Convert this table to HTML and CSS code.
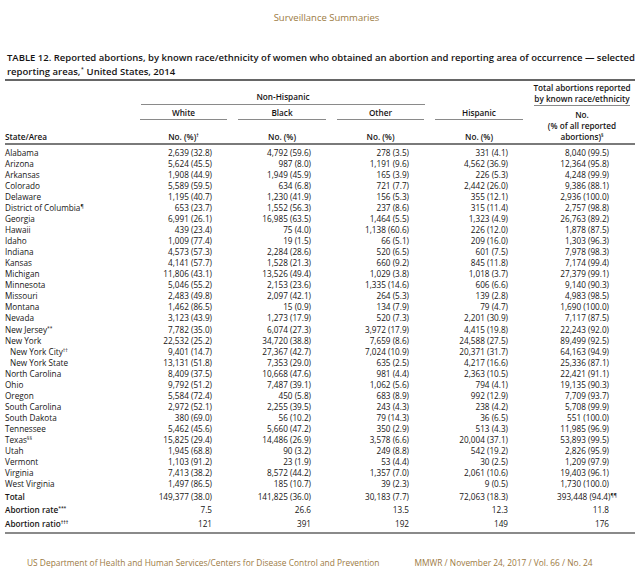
FILE: index.html
```html
<!DOCTYPE html>
<html lang="en">
<head>
<meta charset="utf-8">
<title>MMWR Table 12</title>
<link rel="stylesheet" href="styles.css">
</head>
<body>
<div class="page">
  <div class="running">Surveillance Summaries</div>
  <h1 class="title"><span class="tline">TABLE 12. Reported abortions, by known race/ethnicity of women who obtained an abortion and reporting area of occurrence — selected</span> <span class="tline">reporting areas,<sup>*</sup> United States, 2014</span></h1>
  <div class="table">
    <div class="thead cols">
      <div class="h-state">State/Area</div>
      <div class="h-nonhisp">Non-Hispanic</div>
      <div class="h-group h-white">White</div>
      <div class="h-group h-black">Black</div>
      <div class="h-group h-other">Other</div>
      <div class="h-group h-hisp">Hispanic</div>
      <div class="h-no h-no-white">No. (%)<sup>†</sup></div>
      <div class="h-no h-no-black">No. (%)</div>
      <div class="h-no h-no-other">No. (%)</div>
      <div class="h-no h-no-hisp">No. (%)</div>
      <div class="h-total">Total abortions reported<br>by known race/ethnicity</div>
      <div class="h-total-no">No.<br>(% of all reported<br>abortions)<sup>§</sup></div>
    </div>
    <div class="tbody">
      <div class="row cols"><span class="st">Alabama</span><span class="v">2,639 (32.8)</span><span class="v">4,792 (59.6)</span><span class="v">278 (3.5)</span><span class="v">331 (4.1)</span><span class="v t">8,040 (99.5)</span></div>
      <div class="row cols"><span class="st">Arizona</span><span class="v">5,624 (45.5)</span><span class="v">987 (8.0)</span><span class="v">1,191 (9.6)</span><span class="v">4,562 (36.9)</span><span class="v t">12,364 (95.8)</span></div>
      <div class="row cols"><span class="st">Arkansas</span><span class="v">1,908 (44.9)</span><span class="v">1,949 (45.9)</span><span class="v">165 (3.9)</span><span class="v">226 (5.3)</span><span class="v t">4,248 (99.9)</span></div>
      <div class="row cols"><span class="st">Colorado</span><span class="v">5,589 (59.5)</span><span class="v">634 (6.8)</span><span class="v">721 (7.7)</span><span class="v">2,442 (26.0)</span><span class="v t">9,386 (88.1)</span></div>
      <div class="row cols"><span class="st">Delaware</span><span class="v">1,195 (40.7)</span><span class="v">1,230 (41.9)</span><span class="v">156 (5.3)</span><span class="v">355 (12.1)</span><span class="v t">2,936 (100.0)</span></div>
      <div class="row cols"><span class="st">District of Columbia<sup>¶</sup></span><span class="v">653 (23.7)</span><span class="v">1,552 (56.3)</span><span class="v">237 (8.6)</span><span class="v">315 (11.4)</span><span class="v t">2,757 (98.8)</span></div>
      <div class="row cols"><span class="st">Georgia</span><span class="v">6,991 (26.1)</span><span class="v">16,985 (63.5)</span><span class="v">1,464 (5.5)</span><span class="v">1,323 (4.9)</span><span class="v t">26,763 (89.2)</span></div>
      <div class="row cols"><span class="st">Hawaii</span><span class="v">439 (23.4)</span><span class="v">75 (4.0)</span><span class="v">1,138 (60.6)</span><span class="v">226 (12.0)</span><span class="v t">1,878 (87.5)</span></div>
      <div class="row cols"><span class="st">Idaho</span><span class="v">1,009 (77.4)</span><span class="v">19 (1.5)</span><span class="v">66 (5.1)</span><span class="v">209 (16.0)</span><span class="v t">1,303 (96.3)</span></div>
      <div class="row cols"><span class="st">Indiana</span><span class="v">4,573 (57.3)</span><span class="v">2,284 (28.6)</span><span class="v">520 (6.5)</span><span class="v">601 (7.5)</span><span class="v t">7,978 (98.3)</span></div>
      <div class="row cols"><span class="st">Kansas</span><span class="v">4,141 (57.7)</span><span class="v">1,528 (21.3)</span><span class="v">660 (9.2)</span><span class="v">845 (11.8)</span><span class="v t">7,174 (99.4)</span></div>
      <div class="row cols"><span class="st">Michigan</span><span class="v">11,806 (43.1)</span><span class="v">13,526 (49.4)</span><span class="v">1,029 (3.8)</span><span class="v">1,018 (3.7)</span><span class="v t">27,379 (99.1)</span></div>
      <div class="row cols"><span class="st">Minnesota</span><span class="v">5,046 (55.2)</span><span class="v">2,153 (23.6)</span><span class="v">1,335 (14.6)</span><span class="v">606 (6.6)</span><span class="v t">9,140 (90.3)</span></div>
      <div class="row cols"><span class="st">Missouri</span><span class="v">2,483 (49.8)</span><span class="v">2,097 (42.1)</span><span class="v">264 (5.3)</span><span class="v">139 (2.8)</span><span class="v t">4,983 (98.5)</span></div>
      <div class="row cols"><span class="st">Montana</span><span class="v">1,462 (86.5)</span><span class="v">15 (0.9)</span><span class="v">134 (7.9)</span><span class="v">79 (4.7)</span><span class="v t">1,690 (100.0)</span></div>
      <div class="row cols"><span class="st">Nevada</span><span class="v">3,123 (43.9)</span><span class="v">1,273 (17.9)</span><span class="v">520 (7.3)</span><span class="v">2,201 (30.9)</span><span class="v t">7,117 (87.5)</span></div>
      <div class="row cols"><span class="st">New Jersey<sup>**</sup></span><span class="v">7,782 (35.0)</span><span class="v">6,074 (27.3)</span><span class="v">3,972 (17.9)</span><span class="v">4,415 (19.8)</span><span class="v t">22,243 (92.0)</span></div>
      <div class="row cols"><span class="st">New York</span><span class="v">22,532 (25.2)</span><span class="v">34,720 (38.8)</span><span class="v">7,659 (8.6)</span><span class="v">24,588 (27.5)</span><span class="v t">89,499 (92.5)</span></div>
      <div class="row cols"><span class="st sub">New York City<sup>††</sup></span><span class="v">9,401 (14.7)</span><span class="v">27,367 (42.7)</span><span class="v">7,024 (10.9)</span><span class="v">20,371 (31.7)</span><span class="v t">64,163 (94.9)</span></div>
      <div class="row cols"><span class="st sub">New York State</span><span class="v">13,131 (51.8)</span><span class="v">7,353 (29.0)</span><span class="v">635 (2.5)</span><span class="v">4,217 (16.6)</span><span class="v t">25,336 (87.1)</span></div>
      <div class="row cols"><span class="st">North Carolina</span><span class="v">8,409 (37.5)</span><span class="v">10,668 (47.6)</span><span class="v">981 (4.4)</span><span class="v">2,363 (10.5)</span><span class="v t">22,421 (91.1)</span></div>
      <div class="row cols"><span class="st">Ohio</span><span class="v">9,792 (51.2)</span><span class="v">7,487 (39.1)</span><span class="v">1,062 (5.6)</span><span class="v">794 (4.1)</span><span class="v t">19,135 (90.3)</span></div>
      <div class="row cols"><span class="st">Oregon</span><span class="v">5,584 (72.4)</span><span class="v">450 (5.8)</span><span class="v">683 (8.9)</span><span class="v">992 (12.9)</span><span class="v t">7,709 (93.7)</span></div>
      <div class="row cols"><span class="st">South Carolina</span><span class="v">2,972 (52.1)</span><span class="v">2,255 (39.5)</span><span class="v">243 (4.3)</span><span class="v">238 (4.2)</span><span class="v t">5,708 (99.9)</span></div>
      <div class="row cols"><span class="st">South Dakota</span><span class="v">380 (69.0)</span><span class="v">56 (10.2)</span><span class="v">79 (14.3)</span><span class="v">36 (6.5)</span><span class="v t">551 (100.0)</span></div>
      <div class="row cols"><span class="st">Tennessee</span><span class="v">5,462 (45.6)</span><span class="v">5,660 (47.2)</span><span class="v">350 (2.9)</span><span class="v">513 (4.3)</span><span class="v t">11,985 (96.9)</span></div>
      <div class="row cols"><span class="st">Texas<sup>§§</sup></span><span class="v">15,825 (29.4)</span><span class="v">14,486 (26.9)</span><span class="v">3,578 (6.6)</span><span class="v">20,004 (37.1)</span><span class="v t">53,893 (99.5)</span></div>
      <div class="row cols"><span class="st">Utah</span><span class="v">1,945 (68.8)</span><span class="v">90 (3.2)</span><span class="v">249 (8.8)</span><span class="v">542 (19.2)</span><span class="v t">2,826 (95.9)</span></div>
      <div class="row cols"><span class="st">Vermont</span><span class="v">1,103 (91.2)</span><span class="v">23 (1.9)</span><span class="v">53 (4.4)</span><span class="v">30 (2.5)</span><span class="v t">1,209 (97.9)</span></div>
      <div class="row cols"><span class="st">Virginia</span><span class="v">7,413 (38.2)</span><span class="v">8,572 (44.2)</span><span class="v">1,357 (7.0)</span><span class="v">2,061 (10.6)</span><span class="v t">19,403 (96.1)</span></div>
      <div class="row cols"><span class="st">West Virginia</span><span class="v">1,497 (86.5)</span><span class="v">185 (10.7)</span><span class="v">39 (2.3)</span><span class="v">9 (0.5)</span><span class="v t">1,730 (100.0)</span></div>
    </div>
    <div class="tfoot">
      <div class="frow cols"><span class="st strong">Total</span><span class="v">149,377 (38.0)</span><span class="v">141,825 (36.0)</span><span class="v">30,183 (7.7)</span><span class="v">72,063 (18.3)</span><span class="v t">393,448 (94.4)<sup class="hang">¶¶</sup></span></div>
      <div class="frow cols"><span class="st strong">Abortion rate<sup>***</sup></span><span class="v">7.5</span><span class="v">26.6</span><span class="v">13.5</span><span class="v">12.3</span><span class="v t">11.8</span></div>
      <div class="frow cols"><span class="st strong">Abortion ratio<sup>†††</sup></span><span class="v">121</span><span class="v">391</span><span class="v">192</span><span class="v">149</span><span class="v t">176</span></div>
    </div>
  </div>
  <div class="footer">
    <span class="foot-left">US Department of Health and Human Services/Centers for Disease Control and Prevention</span>
    <span class="foot-right">MMWR / November 24, 2017 / Vol. 66 / No. 24</span>
  </div>
</div>
</body>
</html>
```

FILE: styles.css
```css
* { box-sizing: border-box; }
html, body { margin: 0; padding: 0; background: #ffffff; }
body {
  font-family: "Open Sans", "Liberation Sans", sans-serif;
  color: #161414;
  font-size: 8.2px;
  line-height: 11px;
}
.page {
  width: 640px;
  height: 585px;
  padding: 0 5px;
  overflow: hidden;
}
.running {
  margin-top: 12px;
  height: 12px;
  line-height: 12px;
  font-size: 9.5px;
  text-align: center;
  padding-left: 13px;
  color: #9c7a3f;
}
.title {
  margin: 27px 0 0 0;
  padding: 0 0 0 2px;
  font-size: 9.5px;
  line-height: 14px;
  font-weight: 600;
  border-bottom: 2px solid #666666;
  height: 30px;
  display: flex;
  flex-direction: column;
}
.tline { display: block; white-space: nowrap; height: 14px; }
sup {
  font-size: 5px;
  line-height: 0;
  vertical-align: 3px;
}
.title sup { vertical-align: 4px; margin: 0 0.5px; }
.cols {
  display: grid;
  grid-template-columns: 129px 98px 99px 98px 99px 107px;
}
.thead {
  grid-template-rows: 24px 15px 23px;
  border-bottom: 2px solid #7a7a7a;
  font-weight: 600;
}
.thead > div { align-self: end; text-align: center; line-height: 11px; }
.h-state { grid-column: 1; grid-row: 1 / 4; text-align: left !important; padding-bottom: 1.5px; }
.h-nonhisp {
  grid-column: 2 / 5; grid-row: 1;
  margin: 0 4px 0 7px;
  border-bottom: 1px solid #8a8a8a;
  padding-bottom: 2px;
}
.h-group {
  grid-row: 2;
  margin: 0 5px 0 6px;
  border-bottom: 1px solid #8a8a8a;
  padding-bottom: 1.5px;
}
.h-white { grid-column: 2; }
.h-black { grid-column: 3; }
.h-other { grid-column: 4; }
.h-hisp { grid-column: 5; }
.h-no { grid-row: 3; margin: 0 5px 0 6px; padding-bottom: 1.5px; }
.h-no-white { grid-column: 2; }
.h-no-black { grid-column: 3; }
.h-no-other { grid-column: 4; }
.h-no-hisp { grid-column: 5; }
.h-total {
  grid-column: 6; grid-row: 1;
  margin: 0 5px 0 6px;
  border-bottom: 1px solid #8a8a8a;
  padding-bottom: 1px;
  margin-bottom: -1px;
  white-space: nowrap;
  display: flex; flex-direction: column; align-items: center;
}
.h-total-no {
  grid-column: 6; grid-row: 2 / 4;
  margin: 0 5px 0 6px;
  padding-bottom: 1.5px;
  white-space: nowrap;
}
.tbody { padding-top: 1.5px; }
.row { height: 11.07px; line-height: 11.07px; }
.st { white-space: nowrap; }
.st.sub { padding-left: 5px; }
.st.strong { font-weight: 600; }
.v { text-align: right; padding-right: 20px; white-space: nowrap; }
.v.t { padding-right: 26px; }
.tfoot { border-bottom: 2px solid #8a8a8a; padding-bottom: 1.5px; }
.frow { height: 13.5px; line-height: 13.5px; }
.frow:first-child { margin-top: 0.3px; }
.hang { margin-right: -8px; }
.footer {
  margin-top: 23px;
  display: flex;
  gap: 35px;
  padding-left: 22px;
  height: 12px;
  line-height: 12px;
  font-size: 8.4px;
  color: #9c7a3f;
  white-space: nowrap;
}
```
